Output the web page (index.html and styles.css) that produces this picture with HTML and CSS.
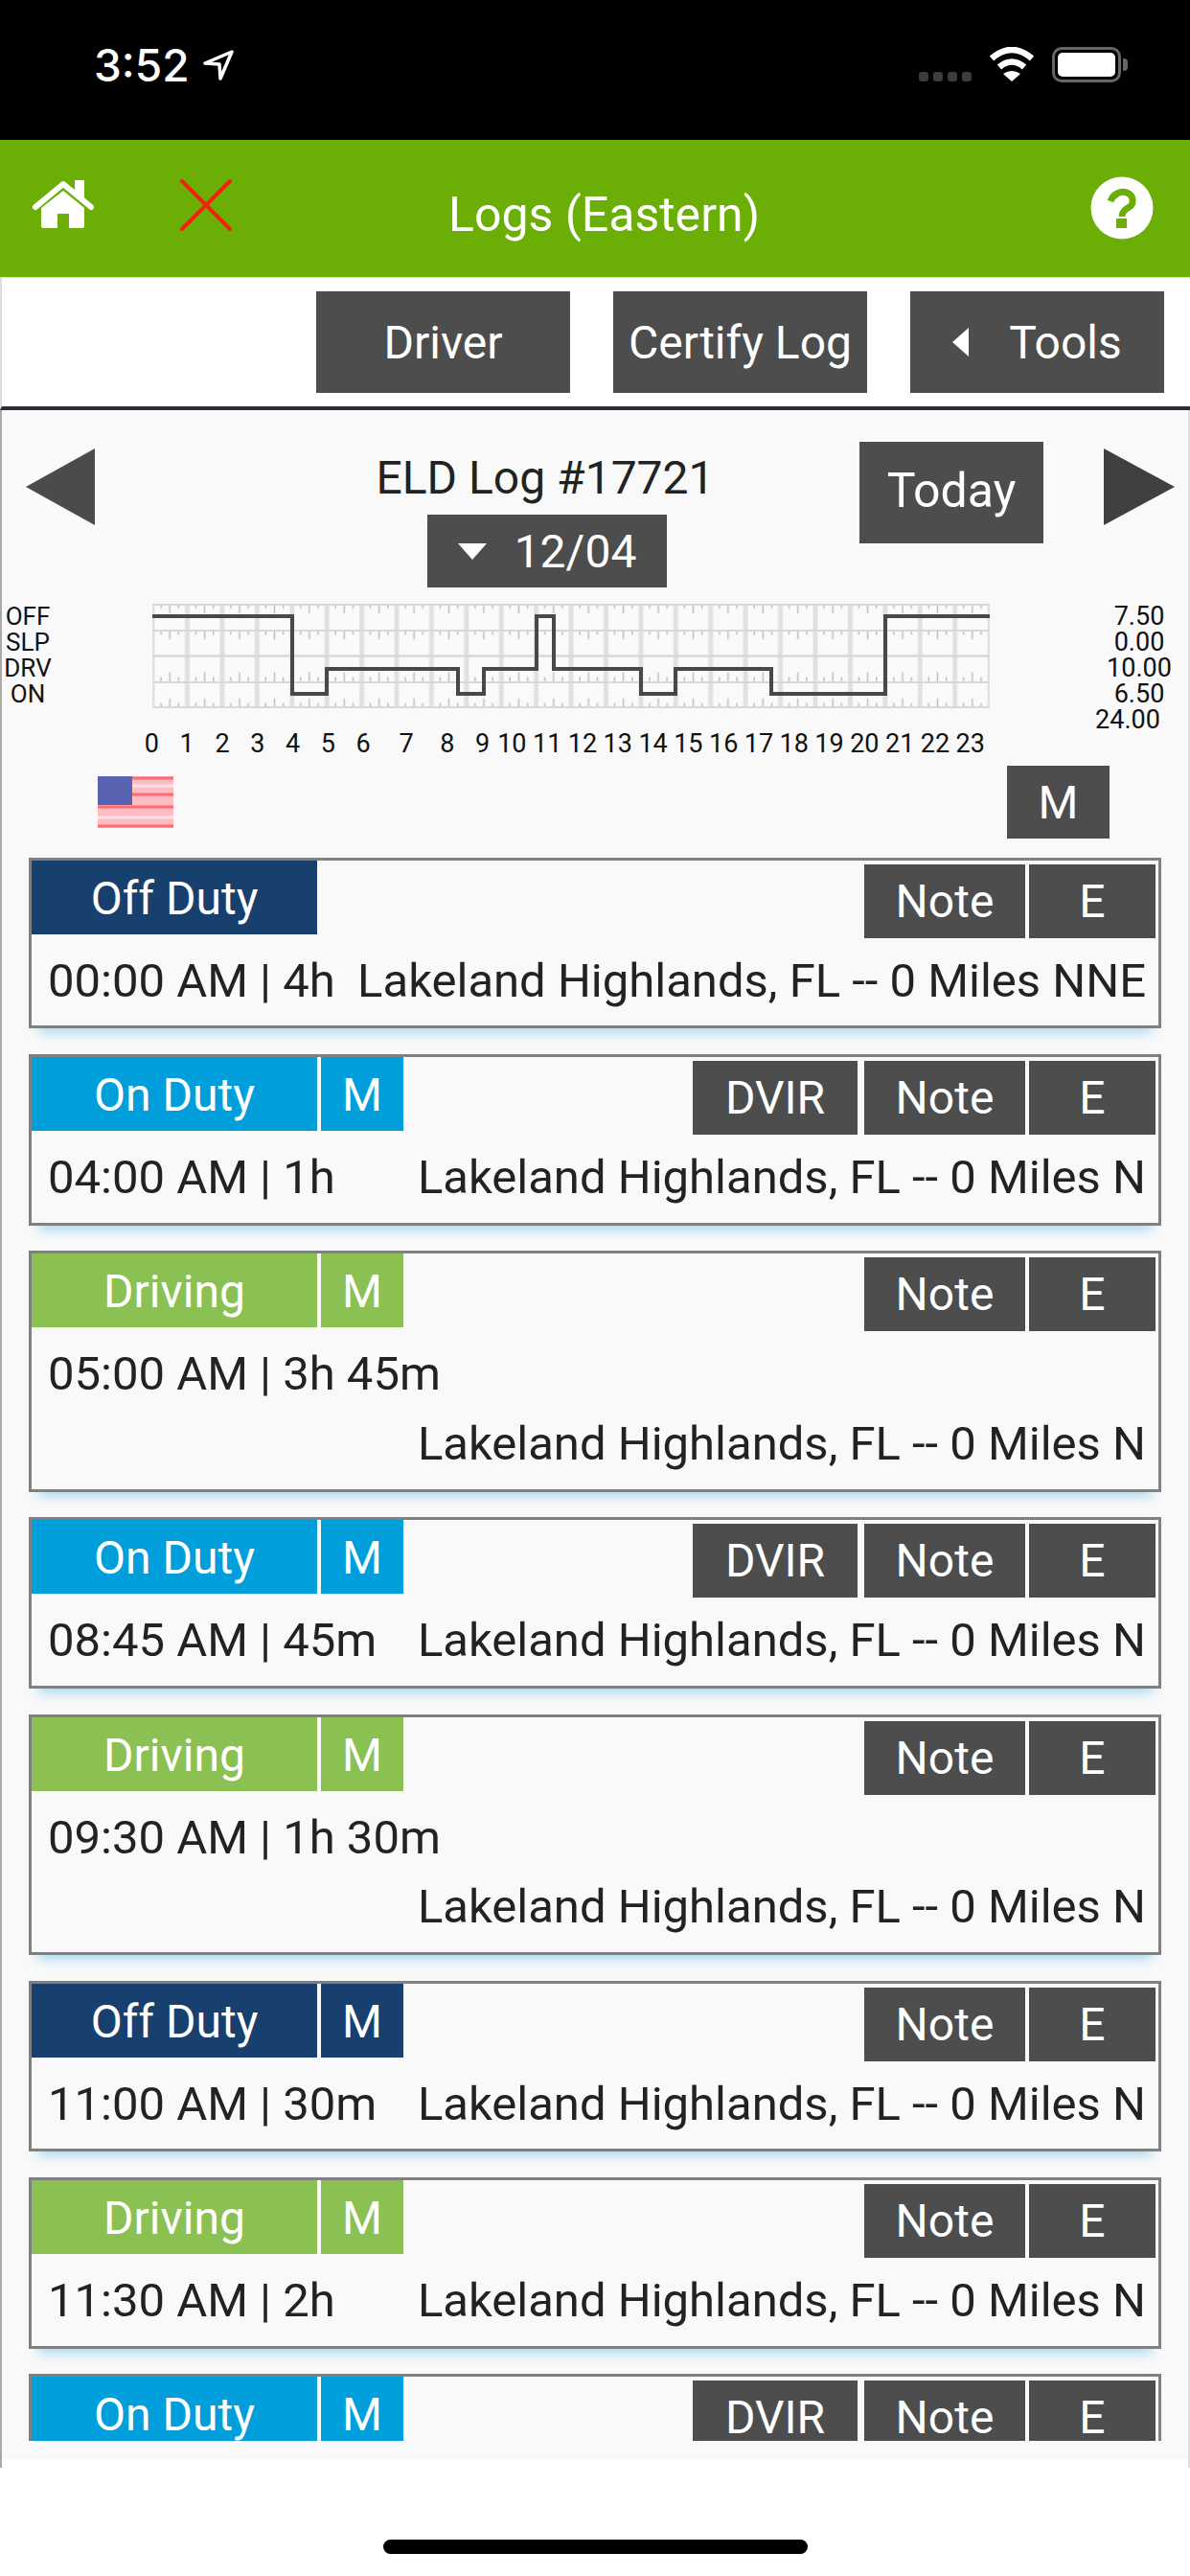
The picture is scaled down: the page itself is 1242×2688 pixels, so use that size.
FILE: index.html
```html
<!DOCTYPE html>
<html lang="en">
<head>
  <meta charset="UTF-8">
  <meta name="viewport" content="width=device-width, initial-scale=1.0">
  <title>Logs (Eastern)</title>
  <link rel="stylesheet" href="styles.css">
</head>
<body>
  <!-- status bar -->
  <div class="status-bar">
    <span class="status-time">3:52</span>
    <svg class="status-arrow" width="32" height="32" viewBox="0 0 32 32"><path d="M30 2 L2 14 L17 15 L18 30 Z" fill="none" stroke="#fff" stroke-width="3.5" stroke-linejoin="round"/></svg>
    <div class="signal-dots"><i></i><i></i><i></i><i></i></div>
    <svg class="status-wifi" width="48" height="37" viewBox="0 0 48 37">
      <path d="M3 12 Q24 -6 45 12" fill="none" stroke="#fff" stroke-width="6.5"/>
      <path d="M11 21 Q24 10 37 21" fill="none" stroke="#fff" stroke-width="6.5"/>
      <path d="M24 36 L15 28 Q24 22 33 28 Z" fill="#fff"/>
    </svg>
    <div class="battery"><div class="battery-fill"></div></div>
    <div class="battery-cap"></div>
  </div>

  <header class="header">
    <svg class="icon-home" width="64" height="52" viewBox="0 0 64 52">
      <path d="M3 28 L32 4 L61 28" fill="none" stroke="#fff" stroke-width="6" stroke-linecap="round" stroke-linejoin="round"/>
      <rect x="44" y="0" width="10" height="18" fill="#fff"/>
      <path d="M32 11 L54 29 L54 48 Q54 50 52 50 L38 50 L38 35 L26 35 L26 50 L11 50 Q9 50 9 48 L9 29 Z" fill="#fff"/>
    </svg>
    <svg class="icon-close" width="56" height="56" viewBox="0 0 56 56">
      <path d="M3 3 L53 53 M53 3 L3 53" stroke="#f5200a" stroke-width="4" stroke-linecap="round"/>
    </svg>
    <div class="header-title">Logs (Eastern)</div>
    <svg class="icon-help" width="66" height="66" viewBox="0 0 66 66">
      <circle cx="33" cy="33" r="32.5" fill="#fff"/>
      <path d="M21 26 C24 18 32 15 38 17 C46 20 46 30 39 33 C34 36 33 38 33 42" fill="none" stroke="#6aae06" stroke-width="7"/>
      <rect x="27" y="44" width="11" height="10" fill="#6aae06"/>
    </svg>
  </header>

  <div class="toolbar">
    <a class="btn toolbar-btn">Driver</a>
    <a class="btn toolbar-btn">Certify Log</a>
    <a class="btn toolbar-btn tools-btn"><span class="tri-left"></span>Tools</a>
  </div>

  <main class="log-page">
    <div class="log-scroll">
      <div class="log-nav">
        <span class="nav-arrow nav-prev"></span>
        <div class="log-heading">
          <div class="log-title">ELD Log #17721</div>
          <a class="btn date-btn"><span class="tri-down"></span>12/04</a>
        </div>
        <a class="btn today-btn">Today</a>
        <span class="nav-arrow nav-next"></span>
      </div>

      <div class="chart-row">
        <div class="chart-labels">
          <div>OFF</div><div>SLP</div><div>DRV</div><div>ON</div>
        </div>
        <svg class="chart" width="874" height="109" viewBox="0 0 874 109">
          <defs>
            <pattern id="ticks-down" width="36.42" height="27.25" patternUnits="userSpaceOnUse">
              <path d="M9.1 0V5 M18.2 0V10 M27.3 0V5" stroke="#bdbdbd" stroke-width="1.5"/>
            </pattern>
            <pattern id="ticks-up" width="36.42" height="27.25" patternUnits="userSpaceOnUse">
              <path d="M9.1 27.25V22 M18.2 27.25V17 M27.3 27.25V22" stroke="#bdbdbd" stroke-width="1.5"/>
            </pattern>
            <pattern id="hours" width="36.42" height="109" patternUnits="userSpaceOnUse">
              <rect x="0" width="2.5" height="109" fill="#e0e0e0"/>
              <rect x="34" width="2.42" height="109" fill="#e0e0e0"/>
            </pattern>
          </defs>
          <rect width="874" height="109" fill="#fafafa"/>
          <rect width="874" height="109" fill="url(#hours)"/>
          <rect width="874" height="54" fill="url(#ticks-down)"/>
          <rect y="54.5" width="874" height="54.5" fill="url(#ticks-up)"/>
          <path d="M0 1H874 M0 28H874 M0 82H874 M0 108H874" stroke="#d8d8d8" stroke-width="2"/>
          <path d="M0 54.5H874" stroke="#d8d8d8" stroke-width="2.5"/>
          <path d="M0 13H146V94H182V68H319V94H346V68H401V13H419V68H510V94H546V68H646V94H765V13H874" fill="none" stroke="#484848" stroke-width="4"/>
        </svg>
        <div class="chart-totals">
          <div>7.50</div><div>0.00</div><div>10.00</div><div>6.50</div>
          <div class="chart-total">24.00</div>
        </div>
      </div>

      <div class="chart-hours">
        <span>0</span><span>1</span><span>2</span><span>3</span><span>4</span><span>5</span><span>6</span><span class="hour-7">7</span><span class="hour-8">8</span><span>9</span><span class="hour-10">10</span><span>11</span><span>12</span><span>13</span><span>14</span><span>15</span><span>16</span><span>17</span><span>18</span><span>19</span><span>20</span><span>21</span><span>22</span><span>23</span>
      </div>

      <div class="flag-row">
        <svg class="flag" width="79" height="54" viewBox="0 0 79 54">
          <rect width="79" height="54" fill="#ffbcc2"/>
          <path d="M0 2H79 M0 19H79 M0 32H79 M0 52H79" stroke="#ff6a74" stroke-width="3"/>
          <path d="M36 10H79 M0 43H79" stroke="#ffe2e4" stroke-width="3"/>
          <rect width="36" height="30" fill="#5a62b2"/>
        </svg>
        <a class="btn m-btn">M</a>
      </div>

      <div class="log-list">
        <div class="log-card">
          <div class="card-head">
            <span class="status off-duty status-name">Off Duty</span>
            <div class="card-actions"><a class="btn note-btn">Note</a><a class="btn e-btn">E</a></div>
          </div>
          <div class="card-body"><span>00:00 AM | 4h</span><span class="location">Lakeland Highlands, FL -- 0 Miles NNE</span></div>
        </div>

        <div class="log-card">
          <div class="card-head">
            <span class="status on-duty status-name">On Duty</span><span class="status on-duty status-m">M</span>
            <div class="card-actions"><a class="btn dvir-btn">DVIR</a><a class="btn note-btn">Note</a><a class="btn e-btn">E</a></div>
          </div>
          <div class="card-body"><span>04:00 AM | 1h</span><span class="location">Lakeland Highlands, FL -- 0 Miles N</span></div>
        </div>

        <div class="log-card">
          <div class="card-head">
            <span class="status driving status-name">Driving</span><span class="status driving status-m">M</span>
            <div class="card-actions"><a class="btn note-btn">Note</a><a class="btn e-btn">E</a></div>
          </div>
          <div class="card-body"><span>05:00 AM | 3h 45m</span><span class="location">Lakeland Highlands, FL -- 0 Miles N</span></div>
        </div>

        <div class="log-card">
          <div class="card-head">
            <span class="status on-duty status-name">On Duty</span><span class="status on-duty status-m">M</span>
            <div class="card-actions"><a class="btn dvir-btn">DVIR</a><a class="btn note-btn">Note</a><a class="btn e-btn">E</a></div>
          </div>
          <div class="card-body"><span>08:45 AM | 45m</span><span class="location">Lakeland Highlands, FL -- 0 Miles N</span></div>
        </div>

        <div class="log-card">
          <div class="card-head">
            <span class="status driving status-name">Driving</span><span class="status driving status-m">M</span>
            <div class="card-actions"><a class="btn note-btn">Note</a><a class="btn e-btn">E</a></div>
          </div>
          <div class="card-body"><span>09:30 AM | 1h 30m</span><span class="location">Lakeland Highlands, FL -- 0 Miles N</span></div>
        </div>

        <div class="log-card">
          <div class="card-head">
            <span class="status off-duty status-name">Off Duty</span><span class="status off-duty status-m">M</span>
            <div class="card-actions"><a class="btn note-btn">Note</a><a class="btn e-btn">E</a></div>
          </div>
          <div class="card-body"><span>11:00 AM | 30m</span><span class="location">Lakeland Highlands, FL -- 0 Miles N</span></div>
        </div>

        <div class="log-card">
          <div class="card-head">
            <span class="status driving status-name">Driving</span><span class="status driving status-m">M</span>
            <div class="card-actions"><a class="btn note-btn">Note</a><a class="btn e-btn">E</a></div>
          </div>
          <div class="card-body"><span>11:30 AM | 2h</span><span class="location">Lakeland Highlands, FL -- 0 Miles N</span></div>
        </div>

        <div class="log-card">
          <div class="card-head">
            <span class="status on-duty status-name">On Duty</span><span class="status on-duty status-m">M</span>
            <div class="card-actions"><a class="btn dvir-btn">DVIR</a><a class="btn note-btn">Note</a><a class="btn e-btn">E</a></div>
          </div>
        </div>
      </div>
    </div>
  </main>

  <footer class="home-bar-wrap"><div class="home-bar"></div></footer>
</body>
</html>
```

FILE: styles.css
```css
html, body {
  margin: 0;
  padding: 0;
}
body {
  width: 1242px;
  height: 2688px;
  overflow: hidden;
  display: flex;
  flex-direction: column;
  background-color: white;
  font-family: 'Roboto', 'Liberation Sans', sans-serif;
  color: #222;
}

/* status bar */
.status-bar {
  height: 146px;
  flex: none;
  background-color: black;
  display: flex;
  align-items: flex-start;
  color: white;
}
.status-time {
  margin: 41px 0 0 98px;
  font-family: 'Inter', sans-serif;
  font-size: 46px;
  line-height: 54px;
  font-weight: 500;
}
.status-arrow {
  margin: 52px 0 0 14px;
}
.signal-dots {
  display: flex;
  gap: 5px;
  margin: 75px 0 0 auto;
}
.signal-dots i {
  width: 10px;
  height: 10px;
  border-radius: 3px;
  background-color: #3c3c3c;
}
.status-wifi {
  margin: 49px 0 0 18px;
}
.battery {
  box-sizing: border-box;
  width: 72px;
  height: 37px;
  margin: 49px 0 0 18px;
  padding: 3px;
  border: 3px solid #666;
  border-radius: 10px;
}
.battery-fill {
  height: 100%;
  background-color: white;
  border-radius: 5px;
}
.battery-cap {
  width: 5px;
  height: 13px;
  margin: 61px 65px 0 2px;
  background-color: #666;
  border-radius: 0 4px 4px 0;
}

/* green header */
.header {
  height: 143px;
  flex: none;
  background-color: #6aae06;
  display: flex;
  align-items: flex-start;
}
.icon-home {
  margin: 42px 0 0 34px;
}
.icon-close {
  margin: 40px 0 0 89px;
}
.header-title {
  margin: 49px 0 0 225px;
  color: white;
  font-size: 50px;
  line-height: 58px;
  white-space: nowrap;
}
.icon-help {
  margin: 38px 38px 0 auto;
}

.btn {
  display: flex;
  align-items: center;
  justify-content: center;
  background-color: #4c4d4c;
  color: white;
  font-size: 48px;
}

.toolbar {
  box-sizing: border-box;
  height: 139px;
  flex: none;
  display: flex;
  justify-content: flex-end;
  gap: 45px;
  padding: 14px 27px 0 0;
  border-top: 1px solid #ddd;
  border-left: 2px solid #ddd;
  border-bottom: 4px solid #2a2c38;
}
.toolbar-btn {
  width: 265px;
  height: 106px;
}
.tri-left {
  width: 0;
  height: 0;
  border-top: 15px solid transparent;
  border-bottom: 15px solid transparent;
  border-right: 17px solid white;
  margin-right: 42px;
}

/* log page */
.log-page {
  box-sizing: border-box;
  height: 2147px;
  flex: none;
  padding-bottom: 9px;
  border-left: 2px solid #aaa;
  border-right: 2px solid #ddd;
}
.log-scroll {
  box-sizing: border-box;
  height: 100%;
  padding-bottom: 19px;
  background-color: #f9f9f9;
  display: flex;
  flex-direction: column;
}
.log-nav {
  display: flex;
  align-items: flex-start;
  padding-top: 33px;
}
.nav-arrow {
  width: 0;
  height: 0;
  margin-top: 7px;
  border-top: 40px solid transparent;
  border-bottom: 40px solid transparent;
}
.nav-prev {
  margin-left: 25px;
  border-right: 72px solid #4a4b4b;
}
.nav-next {
  margin-left: 63px;
  border-left: 74px solid #3f4041;
}
.log-heading {
  width: 350px;
  margin-left: 297px;
  display: flex;
  flex-direction: column;
  align-items: center;
}
.log-title {
  height: 76px;
  padding-top: 10px;
  box-sizing: border-box;
  font-size: 48px;
  line-height: 56px;
  margin-left: -4px;
  white-space: nowrap;
}
.date-btn {
  width: 250px;
  height: 76px;
}
.tri-down {
  width: 0;
  height: 0;
  margin-right: 29px;
  border-left: 15px solid transparent;
  border-right: 15px solid transparent;
  border-top: 17px solid white;
}
.today-btn {
  box-sizing: border-box;
  width: 192px;
  height: 106px;
  margin-left: 151px;
  padding-bottom: 4px;
  font-size: 50px;
  outline: 2px solid white;
}

.chart-row {
  display: flex;
  align-items: flex-start;
  height: 133px;
  margin-top: 17px;
  font-size: 26px;
  line-height: 27px;
  color: #111;
}
.chart-labels {
  width: 54px;
  text-align: center;
}
.chart {
  margin-left: 103px;
  filter: blur(0.7px);
}
.chart-totals {
  width: 80px;
  margin-left: 116px;
  text-align: center;
  font-size: 27px;
}
.chart-total {
  margin-left: -24px;
}
.chart-hours {
  display: flex;
  margin-left: 138px;
  font-size: 27px;
  line-height: 27px;
  color: #111;
}
.chart-hours span {
  width: 36.8px;
  flex: none;
  text-align: center;
}
.chart-hours .hour-7 {
  margin-left: 8px;
}
.chart-hours .hour-8 {
  margin-left: 6px;
}
.chart-hours .hour-10 {
  margin-left: -6px;
}

.flag-row {
  display: flex;
  align-items: center;
  justify-content: space-between;
  margin-top: 9px;
  padding: 0 82px 0 100px;
}
.flag {
  filter: blur(0.6px);
}
.m-btn {
  width: 107px;
  height: 76px;
}

/* log cards */
.log-list {
  flex: 1;
  min-height: 0;
  overflow: hidden;
  margin-top: 19.6px;
  padding: 0 28px;
  display: flex;
  flex-direction: column;
  gap: 26.67px;
}
.log-card {
  flex: none;
  border: 3px solid #808080;
  box-shadow: 0 14px 12px -10px #a3d6ef;
  background-color: #f9f9f9;
}
.card-head {
  display: flex;
  align-items: flex-start;
  height: 81px;
}
.status {
  box-sizing: border-box;
  height: 77px;
  padding-top: 2px;
  display: flex;
  align-items: center;
  justify-content: center;
  color: white;
  font-size: 48px;
}
.status-name {
  width: 298px;
}
.status-m {
  width: 86px;
  margin-left: 4px;
}
.off-duty {
  background-color: #18406e;
}
.on-duty {
  background-color: #009fdb;
}
.driving {
  background-color: #8bc153;
}
.card-actions {
  display: flex;
  margin: 4px 3px 0 auto;
}
.card-actions .btn {
  height: 77px;
}
.dvir-btn {
  width: 172px;
  margin-right: 7px;
}
.note-btn {
  width: 168px;
  margin-right: 4px;
}
.e-btn {
  width: 132px;
}
.card-body {
  display: flex;
  flex-wrap: wrap;
  justify-content: space-between;
  padding: 9px 13px 10px 17px;
  font-size: 49px;
  line-height: 72.67px;
  white-space: nowrap;
}
.location {
  margin-left: auto;
}

.home-bar-wrap {
  flex: 1;
  padding-top: 75px;
  display: flex;
  justify-content: center;
}
.home-bar {
  width: 443px;
  height: 15px;
  background-color: black;
  border-radius: 8px;
}
```
